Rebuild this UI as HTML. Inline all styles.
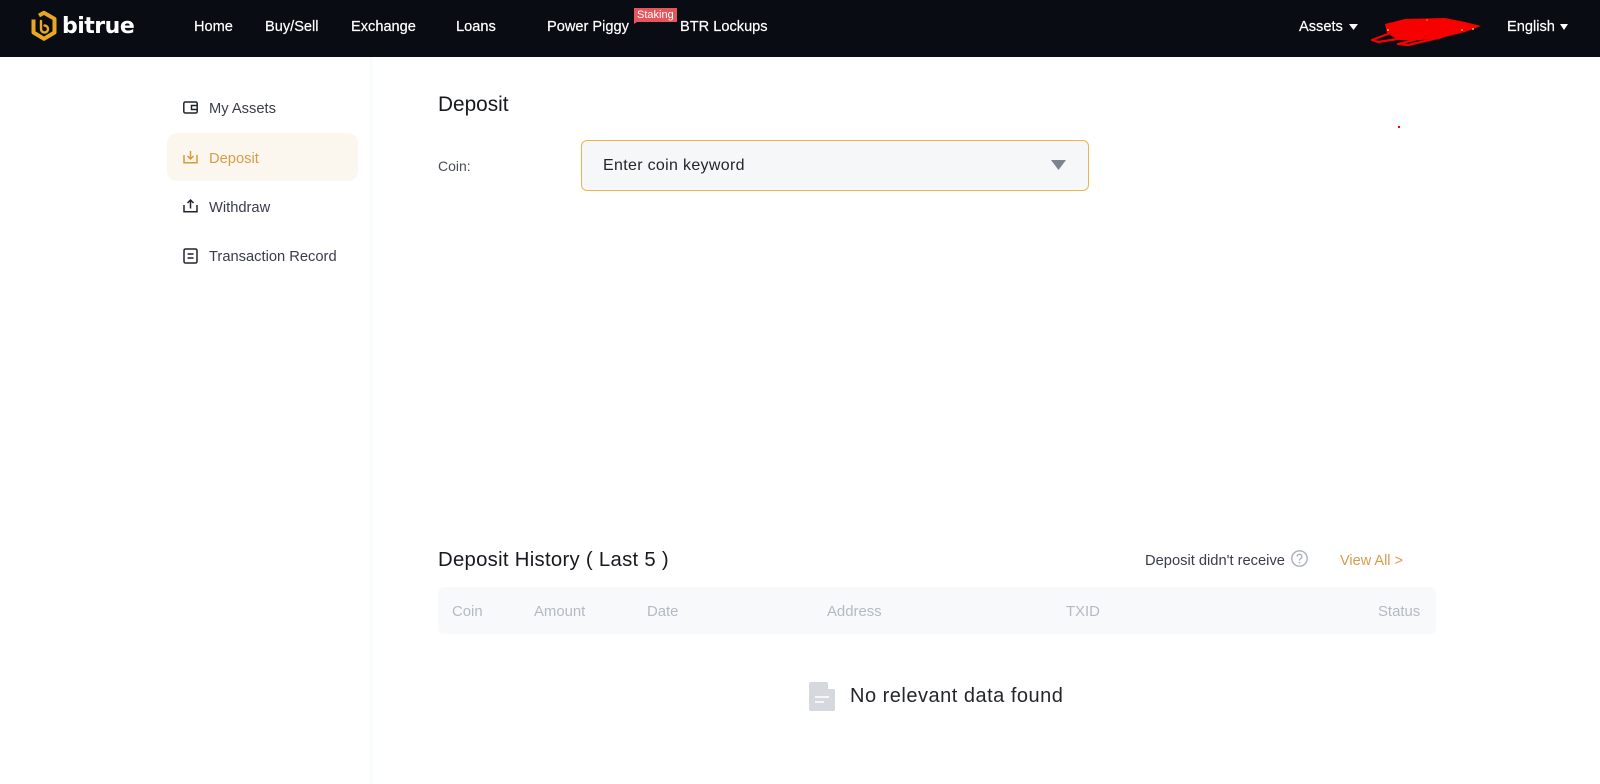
<!DOCTYPE html>
<html lang="en">
<head>
<meta charset="utf-8">
<title>Deposit</title>
<style>
html,body{margin:0;padding:0;width:1600px;height:784px;overflow:hidden;background:#fff;font-family:"Liberation Sans",Arial,sans-serif}
.t{position:absolute;white-space:nowrap;line-height:20px}
.n{color:#fff;font-size:14.6px;top:17px;-webkit-text-stroke:.2px #fff}
.s{color:#3a3d4a;font-size:14.7px}
.h{color:#b4bac3;font-size:14.9px;top:602px}
svg{position:absolute;overflow:visible}
</style>
</head>
<body>
<div style="position:absolute;left:0;top:0;width:1600px;height:57px;background:#090c12"></div>

<svg style="left:31px;top:11px" width="26" height="30" viewBox="0 0 26 30" fill="none">
<path d="M8 4.500L13 1.800L23.500 7.800V21.500L13 27.800L2.500 21.500V8.500" stroke="#e8a823" stroke-width="4" stroke-linejoin="round"/>
<path d="M10 10V18A3.500 3.500 0 1 0 13.500 14.500" stroke="#e8a823" stroke-width="2.400" stroke-linecap="round"/>
</svg>
<div class="t" style="left:62px;top:12px;color:#fff;font-family:'DejaVu Sans',sans-serif;font-size:22px;line-height:30px;font-weight:bold;letter-spacing:-.5px">bitrue</div>

<div class="t n" style="left:194px">Home</div>
<div class="t n" style="left:265px">Buy/Sell</div>
<div class="t n" style="left:351px">Exchange</div>
<div class="t n" style="left:456px">Loans</div>
<div class="t n" style="left:547px">Power Piggy</div>
<div style="position:absolute;left:634px;top:8px;width:43px;height:14px;background:#e6555c"></div>
<svg style="left:634px;top:22px" width="3" height="2"><path d="M0 0H3L0 2Z" fill="#e6555c"/></svg>
<div class="t" style="left:637px;top:8px;color:#fff;font-size:11px;line-height:15px">Staking</div>
<div class="t n" style="left:680px">BTR Lockups</div>

<div class="t n" style="left:1299px">Assets</div>
<svg style="left:1349px;top:24px" width="9" height="6"><path d="M0 0H9L4.500 6Z" fill="#fff"/></svg>
<svg style="left:1371px;top:16px" width="112" height="30" viewBox="0 0 112 30" fill="none">
<path d="M14 8L34 3L74 2L94 6L110 10L94 16L74 21L51 24L27 24L16 17Z" fill="#f60000"/>
<path d="M17 18L1 24L7 26L34 22M51 22L27 28L37 29L71 21" stroke="#f60000" stroke-width="2.200" stroke-linecap="round" stroke-linejoin="round"/>
<circle cx="17" cy="14" r="1" fill="#d4c800"/><circle cx="91" cy="14" r="1" fill="#d4c800"/><circle cx="102" cy="13" r="1" fill="#d4c800"/><circle cx="56" cy="4" r="1" fill="#c87000"/>
</svg>
<div class="t n" style="left:1507px">English</div>
<svg style="left:1560px;top:24px" width="8" height="6"><path d="M0 0H8L4 6Z" fill="#fff"/></svg>

<div style="position:absolute;left:369px;top:57px;width:4px;height:727px;background:#fafbfc"></div>
<div style="position:absolute;left:167px;top:133px;width:191px;height:48px;border-radius:10px;background:#fcf7ee"></div>

<svg style="left:182.500px;top:101px" width="15" height="13" viewBox="0 0 15 13" fill="none" stroke="#20242e" stroke-width="1.500">
<rect x=".8" y="1" width="13.400" height="11" rx="1.500"/><path d="M13.500 4.500H8.500V8.500H13.500"/>
</svg>
<div class="t s" style="left:209px;top:99px">My Assets</div>

<svg style="left:182.500px;top:150px" width="15" height="14" viewBox="0 0 15 14" fill="none" stroke="#d99a39" stroke-width="1.500">
<path d="M1 5V12.700H14V5"/><path d="M7.500 1V8.500M4.500 6L7.500 9L10.500 6"/>
</svg>
<div class="t" style="left:209px;top:149px;font-size:14.700px;color:#d99a4a">Deposit</div>

<svg style="left:182.500px;top:199px" width="15" height="14" viewBox="0 0 15 14" fill="none" stroke="#20242e" stroke-width="1.500">
<path d="M1 6V12.700H14V6"/><path d="M7.500 9.500V1.500M4.500 4L7.500 1L10.500 4"/>
</svg>
<div class="t s" style="left:209px;top:198px">Withdraw</div>

<svg style="left:182.500px;top:248px" width="15" height="16" viewBox="0 0 15 16" fill="none" stroke="#20242e" stroke-width="1.500">
<rect x="1" y="1" width="13" height="14" rx="1.500"/><path d="M4.500 6H10.500M4.500 10H10.500"/>
</svg>
<div class="t s" style="left:209px;top:247px">Transaction Record</div>

<div class="t" style="left:438px;top:95px;font-size:20.800px;color:#17191f">Deposit</div>
<div class="t" style="left:438px;top:156px;font-size:14px;color:#4a4e58">Coin:</div>
<div style="position:absolute;left:581px;top:140px;width:506px;height:49px;border:1px solid #efb54c;border-radius:6px;background:#f6f7f9"></div>
<div class="t" style="left:603px;top:156px;font-size:16px;letter-spacing:.32px;color:#22252c">Enter coin keyword</div>
<svg style="left:1051px;top:160px" width="15" height="10"><path d="M0 0H15L7.500 10Z" fill="#7d838f"/></svg>

<div class="t" style="left:438px;top:550px;font-size:20.300px;color:#17191f;letter-spacing:.3px">Deposit History ( Last 5 )</div>
<div class="t s" style="left:1145px;top:551px;font-size:14.700px">Deposit didn't receive</div>
<svg style="left:1291px;top:550px" width="17" height="17" viewBox="0 0 17 17" fill="none">
<circle cx="8.500" cy="8.500" r="7.700" stroke="#a9b0ba" stroke-width="1.400"/>
<path d="M6.200 6.600A2.300 2.300 0 1 1 9.500 8.700C8.800 9.100 8.500 9.500 8.500 10.500" stroke="#a9b0ba" stroke-width="1.300"/>
<circle cx="8.500" cy="12.700" r=".8" fill="#a9b0ba"/>
</svg>
<div class="t" style="left:1340px;top:551px;font-size:14.500px;color:#d99a4a">View All &gt;</div>

<div style="position:absolute;left:438px;top:587px;width:998px;height:47px;border-radius:6px;background:#f8f9fb"></div>
<div class="t h" style="left:452px">Coin</div>
<div class="t h" style="left:534px">Amount</div>
<div class="t h" style="left:647px">Date</div>
<div class="t h" style="left:827px">Address</div>
<div class="t h" style="left:1066px">TXID</div>
<div class="t h" style="left:1378px">Status</div>

<svg style="left:809px;top:682px" width="26" height="29" viewBox="0 0 26 29">
<path d="M2 0H18L26 8V27A2 2 0 0 1 24 29H2A2 2 0 0 1 0 27V2A2 2 0 0 1 2 0Z" fill="#d5d9de"/>
<path d="M19 0.500L25.500 7H19Z" fill="#fff"/>
<path d="M6 15H20M6 20H15" stroke="#fff" stroke-width="1.500"/>
</svg>
<div class="t" style="left:850px;top:686px;font-size:20px;color:#24262c;letter-spacing:.5px">No relevant data found</div>

<div style="position:absolute;left:1398px;top:126px;width:2px;height:2px;background:#f00"></div>
</body>
</html>
